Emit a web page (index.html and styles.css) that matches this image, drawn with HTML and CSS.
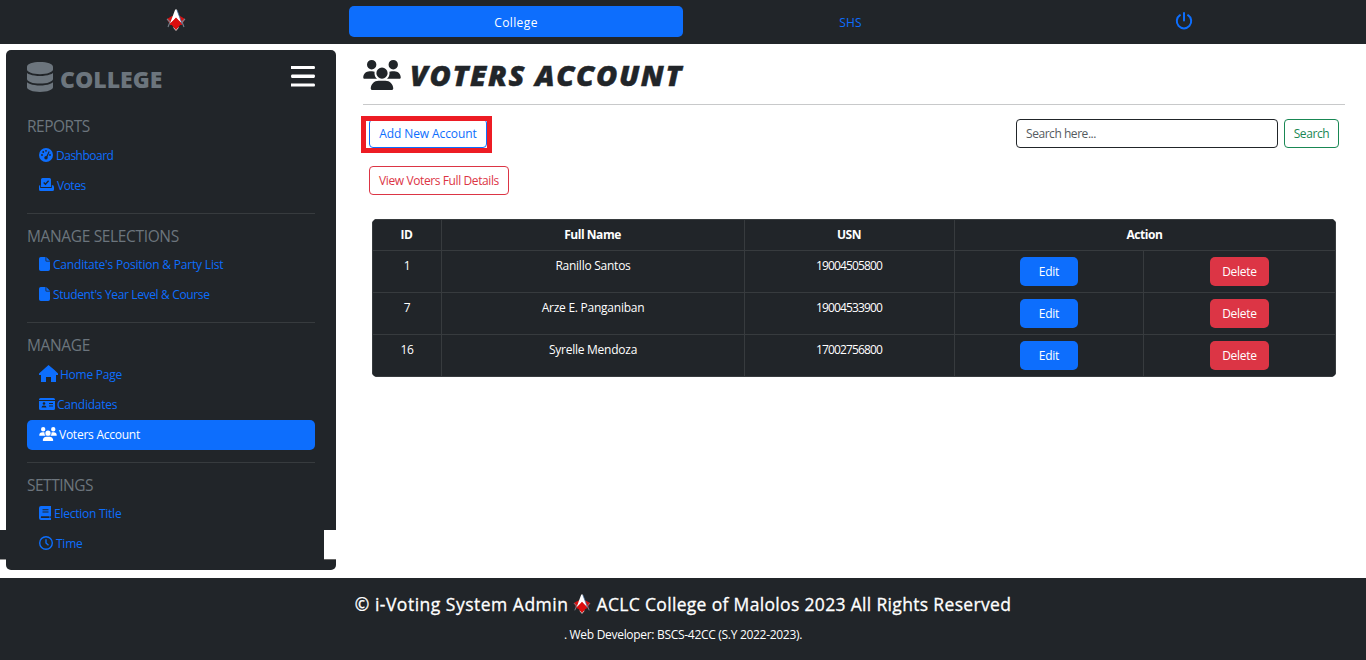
FILE: index.html
```html
<!DOCTYPE html>
<html lang="en">
<head>
<meta charset="utf-8">
<title>Voters Account</title>
<link rel="stylesheet" href="styles.css">
</head>
<body>
<svg class="defs" aria-hidden="true">
  <symbol id="logo" viewBox="0 0 20 22">
    <path d="M1 10 6 7h8l5 3-3 6H4z" fill="#d31212"/>
    <path d="M1 10 4 13 2 18M19 10l-3 3 2 5" fill="none" stroke="#77808a" stroke-width="1.1"/>
    <path d="M9.200 0.500h1.600l3 8 2.200 6L10 9l-6 5.500 2.200-6z" fill="#fff"/>
    <path d="M11 1l3 8 2 6" fill="none" stroke="#416a9a" stroke-width=".8"/>
    <path d="M10 8.500l5.300 6L10 21.500 4.700 14.500z" fill="#dc0d0d"/>
    <path d="M7.500 18.500 10 21.500l2.500-3" fill="none" stroke="#eee" stroke-width=".8"/>
  </symbol>
  <symbol id="users" viewBox="0 0 640 512">
    <path d="M144 0a80 80 0 1 1 0 160A80 80 0 1 1 144 0zM512 0a80 80 0 1 1 0 160A80 80 0 1 1 512 0zM0 298.700C0 239.800 47.800 192 106.700 192h42.700c15.900 0 31 3.500 44.600 9.700c-1.300 7.200-1.900 14.700-1.900 22.300c0 38.200 16.800 72.500 43.300 96H21.300C9.600 320 0 310.400 0 298.700zM405.300 320h-.7c26.600-23.500 43.300-57.800 43.300-96c0-7.600-.7-15-1.900-22.300c13.600-6.300 28.700-9.700 44.600-9.700h42.700C592.200 192 640 239.800 640 298.700c0 11.800-9.600 21.300-21.300 21.300H405.300zM224 224a96 96 0 1 1 192 0a96 96 0 1 1-192 0zM128 485.300C128 411.700 187.700 352 261.300 352H378.700C452.300 352 512 411.700 512 485.300c0 14.700-11.900 26.700-26.700 26.700H154.700c-14.700 0-26.700-11.900-26.700-26.700z"/>
  </symbol>
  <symbol id="file" viewBox="0 0 11 14" preserveAspectRatio="none">
    <path d="M1.800 0H6.500v3.500q0 1 1 1H11v7.700q0 1.800-1.800 1.800H1.800Q0 14 0 12.200V1.800Q0 0 1.800 0zM7.300 0L11 3.700H7.300z"/>
  </symbol>
</svg>

<header class="topbar">
  <a class="tab brand"><svg class="logo"><use href="#logo"/></svg></a>
  <a class="tab active"><span class="t-college">College</span></a>
  <a class="tab"><span class="t-shs">SHS</span></a>
  <a class="tab"><svg class="power" viewBox="0 0 18 18"><path d="M9 1v7.500M5 3.200a7.200 7.200 0 1 0 8 0" fill="none" stroke="currentColor" stroke-width="2" stroke-linecap="round"/></svg></a>
</header>

<div class="page">
  <aside class="sidebar">
    <div class="side-head">
      <svg class="db" viewBox="0 0 448 512" preserveAspectRatio="none"><path d="M448 80v48c0 44.200-100.300 80-224 80S0 172.200 0 128V80C0 35.800 100.300 0 224 0S448 35.800 448 80zM393.200 214.700c20.800-7.400 39.900-16.900 54.800-28.600V288c0 44.200-100.300 80-224 80S0 332.200 0 288V186.100c14.900 11.800 34 21.200 54.800 28.600C99.700 230.700 159.500 240 224 240s124.300-9.300 169.200-25.300zM0 346.100c14.900 11.800 34 21.200 54.800 28.600C99.700 390.700 159.500 400 224 400s124.300-9.300 169.200-25.300c20.800-7.400 39.900-16.900 54.800-28.600V432c0 44.200-100.300 80-224 80S0 476.200 0 432V346.100z"/></svg>
      <h1 class="side-title">COLLEGE</h1>
      <svg class="bars" viewBox="0 0 24 21"><path d="M0 0h23q1 0 1 1.500T23 3H0zM1 8.500h22q1 0 1 1.500t-1 2H1q-1 0-1-1.700T1 8.500zM0 17.500h23q1 0 1 1.500t-1 1.500H0z"/></svg>
    </div>

    <section class="group">
      <h2>REPORTS</h2>
      <a class="item"><svg class="i14" viewBox="0 0 14 14"><circle cx="7" cy="7" r="7"/><g class="cut"><circle cx="3" cy="7" r=".9"/><circle cx="4.200" cy="4" r=".9"/><circle cx="7" cy="2.800" r=".9"/><circle cx="11" cy="7" r=".9"/><circle cx="7" cy="9.800" r="1.700"/><path d="M9.700 3.300l.9.500L8.200 9.500l-1.200-.6z"/></g></svg><span class="tight">Dashboard</span></a>
      <a class="item"><svg class="i15" viewBox="0 0 15 13"><path d="M2 1.500Q2 0 3.500 0h7Q12 0 12 1.500V9H2zM0 8.500Q0 7 1.200 7v3h11.600V7Q15 7 15 9v2.500q0 1.500-1.500 1.500h-12Q0 13 0 11.500z"/><path d="M4.700 4.500l1.700 1.800 3.200-3.600" class="cutline"/></svg><span class="tight">Votes</span></a>
    </section>

    <section class="group">
      <h2 class="wide">MANAGE SELECTIONS</h2>
      <a class="item"><svg class="i11"><use href="#file"/></svg><span class="t-pos">Canditate's Position &amp; Party List</span></a>
      <a class="item"><svg class="i11"><use href="#file"/></svg><span class="t-year">Student's Year Level &amp; Course</span></a>
    </section>

    <section class="group">
      <h2 class="wide">MANAGE</h2>
      <a class="item near"><svg class="i19" viewBox="0 0 19 17"><path d="M9.500 0 0 8.500V10h2v7h5v-5h5v5h5v-7h2V8.500L15.500 5z"/></svg><span>Home Page</span></a>
      <a class="item near"><svg class="i16" viewBox="0 0 16 12"><path d="M0 1.500Q0 0 1.500 0h13Q16 0 16 1.500V2H0zM0 3h16v7.500q0 1.500-1.500 1.500h-13Q0 12 0 10.500z"/><g class="cut"><circle cx="5" cy="5.500" r="1.300"/><path d="M2.500 9.500q0-2 2.500-2t2.500 2zM10 5h4v1h-4zM10 7.500h4v1h-4z"/></g></svg><span>Candidates</span></a>
      <a class="item near active"><svg class="i18"><use href="#users"/></svg><span>Voters Account</span></a>
    </section>

    <section class="group">
      <h2>SETTINGS</h2>
      <a class="item"><svg class="i12" viewBox="0 0 12 14"><path d="M0 2Q0 0 2 0h10v10l-.7.500V12H12v2H2q-2 0-2-2z"/><path class="cut" d="M3.500 3.200h6v1h-6zM3.500 5.500h6v1h-6zM2.200 10.300h8.300V12H2.200q-1-.8 0-1.700z"/></svg><span>Election Title</span></a>
      <a class="item"><svg class="i14" viewBox="0 0 14 14"><path d="M7 3.200V7l2.500 2.200" fill="none" stroke="currentColor" stroke-width="1.400"/><circle cx="7" cy="7" r="6.300" fill="none" stroke="currentColor" stroke-width="1.400"/></svg><span>Time</span></a>
    </section>
    <i class="band-left"></i><i class="band-right"></i>
  </aside>

  <main class="content">
    <div class="title-row">
      <svg class="title-icon"><use href="#users"/></svg>
      <h1 class="title">VOTERS ACCOUNT</h1>
    </div>
    <div class="tools">
      <div class="tool-left">
        <a class="btn blue"><span>Add New Account</span></a>
        <a class="btn red"><span>View Voters Full Details</span></a>
        <i class="marker"></i>
      </div>
      <form class="search">
        <input class="field" placeholder="Search here...">
        <button type="button" class="btn green"><span>Search</span></button>
      </form>
    </div>
    <div class="table-wrap">
      <table>
        <colgroup><col class="c1"><col class="c2"><col class="c3"><col class="c4"><col class="c5"></colgroup>
        <thead><tr><th>ID</th><th>Full Name</th><th>USN</th><th colspan="2">Action</th></tr></thead>
        <tbody>
          <tr><td>1</td><td>Ranillo Santos</td><td class="num">19004505800</td><td><a class="act edit">Edit</a></td><td><a class="act del">Delete</a></td></tr>
          <tr><td>7</td><td>Arze E. Panganiban</td><td class="num">19004533900</td><td><a class="act edit">Edit</a></td><td><a class="act del">Delete</a></td></tr>
          <tr><td>16</td><td>Syrelle Mendoza</td><td class="num">17002756800</td><td><a class="act edit">Edit</a></td><td><a class="act del">Delete</a></td></tr>
        </tbody>
      </table>
    </div>
  </main>
</div>

<footer class="footer">
  <div class="copy"><span class="f1">© i-Voting System Admin</span><svg class="logo small"><use href="#logo"/></svg><span class="f2">ACLC College of Malolos 2023 All Rights Reserved</span></div>
  <div class="dev">. Web Developer: BSCS-42CC (S.Y 2022-2023).</div>
</footer>
</body>
</html>
```

FILE: styles.css
```css
* { box-sizing: border-box; }
body { margin: 0; height: 660px; overflow: hidden; background: #fff; color: #212529; font: 12px/18px "Open Sans", "Noto Sans", sans-serif; letter-spacing: -.25px; white-space: nowrap; }
h1, h2 { margin: 0; }
svg { display: block; fill: currentColor; flex: none; }
.defs { position: absolute; width: 0; height: 0; }

.topbar { height: 44px; padding: 6px 15px 7px; background: #212529; display: grid; grid-template-columns: repeat(4, 334px); }
.tab { display: flex; align-items: center; justify-content: center; color: #0d6efd; border-radius: 5px; padding-top: 2px; }
.tab.active { background: #0d6efd; color: #fff; }
.t-college { letter-spacing: .4px; }
.t-shs { letter-spacing: .1px; padding-left: 1px; }
.brand { padding: 0 12px 3px 0; }
.logo { width: 20px; height: 22px; }
.power { width: 18px; height: 18px; margin-bottom: 3px; }

.page { display: flex; height: 534px; padding: 6px 21px 8px 6px; }
.sidebar { position: relative; width: 330px; height: 520px; padding: 11px 21px; background: #212529; border-radius: 5px; }
.side-head { display: flex; align-items: center; height: 32px; color: #6c757d; margin-bottom: 22px; }
.db { width: 26px; height: 30px; }
.side-title { margin: 3px 0 0 7px; font-size: 23px; line-height: 30px; font-weight: 800; letter-spacing: 0; }
.bars { width: 24px; height: 21px; margin: 0 0 2px auto; color: #fff; }
.group { padding-bottom: 12px; }
.group + .group { border-top: 1px solid #373b3e; padding-top: 11px; }
.group h2 { font-size: 15.500px; line-height: 22px; height: 25.500px; font-weight: 400; color: #6c757d; letter-spacing: -.5px; }
.group h2.wide { letter-spacing: -.35px; }
.item { display: flex; align-items: center; height: 30px; padding: 0 12px; color: #0d6efd; border-radius: 5px; gap: 3px; }
.item.near { gap: 2px; }
.tight { letter-spacing: -.5px; }
.t-pos { letter-spacing: -.2px; }
.t-year { letter-spacing: -.35px; }
.item svg { margin-bottom: 2px; }
.item.active { background: #0d6efd; color: #fff; }
.i11 { width: 11px; height: 14px; }
.i12 { width: 12px; height: 14px; }
.i14 { width: 14px; height: 14px; }
.i15 { width: 15px; height: 13px; }
.i16 { width: 16px; height: 12px; }
.i18 { width: 18px; height: 14px; }
.i19 { width: 19px; height: 17px; }
.cut { fill: #212529; }
.cutline { fill: none; stroke: #212529; stroke-width: 1.300; }
.band-left, .band-right { position: absolute; top: 480px; height: 30px; border-bottom: 1px solid #999; }
.band-left { left: -6px; width: 6px; background: #212529; }
.band-right { right: 0; width: 12px; background: #fff; border-bottom-color: #666; }

.content { flex: 1; padding-left: 27px; }
.title-row { display: flex; align-items: center; height: 55px; padding-bottom: 5px; border-bottom: 1px solid #c8c9ca; }
.title-icon { width: 38px; height: 30px; }
.title { margin-left: 9px; font-size: 29px; line-height: 36px; font-weight: 800; font-style: italic; letter-spacing: 1.600px; -webkit-text-stroke: .5px; }
.tools { display: flex; justify-content: space-between; align-items: flex-start; padding: 14px 6px 0; height: 114px; }
.tool-left { position: relative; display: flex; flex-direction: column; align-items: flex-start; gap: 18px; }
.btn { display: flex; align-items: center; justify-content: center; height: 29px; border: 1px solid; border-radius: 4px; background: #fff; font: inherit; letter-spacing: inherit; padding: 0; }
.blue { width: 118px; color: #0d6efd; letter-spacing: -.1px; }
.red { width: 140px; color: #dc3545; letter-spacing: -.4px; }
.green { width: 55px; color: #198754; letter-spacing: -.4px; }
.marker { position: absolute; left: -8px; top: -3px; width: 131px; height: 37px; border: 5px solid #ed1c24; }
.search { display: flex; gap: 6px; }
.field { width: 262px; height: 29px; border: 1px solid #212529; border-radius: 4px; padding: 0 9px; font: inherit; letter-spacing: -.45px; }
.field::placeholder { color: #555b60; opacity: 1; }

.table-wrap { width: 964px; margin-left: 9px; border-radius: 5px; overflow: hidden; background: #212529; color: #fff; }
table { width: 964px; table-layout: fixed; border-collapse: collapse; }
.c1 { width: 69px; } .c2 { width: 303px; } .c3 { width: 210px; } .c4 { width: 189px; } .c5 { width: 192px; }
th, td { border: 1px solid #373b3e; padding: 6px 0 0; text-align: center; vertical-align: top; }
th { height: 31px; font-weight: 700; padding-right: 1px; letter-spacing: -.45px; }
td { height: 42px; }
.num { letter-spacing: -.85px; padding-right: 1px; }
.act { display: flex; align-items: center; justify-content: center; height: 29px; margin: 0 auto; border-radius: 5px; }
.edit { width: 58px; background: #0d6efd; }
.del { width: 59px; background: #dc3545; }

.footer { height: 82px; background: #212529; color: #fff; padding-top: 13px; }
.copy { display: flex; align-items: center; justify-content: center; height: 26px; font-size: 17.500px; -webkit-text-stroke: .3px; }
.f1 { letter-spacing: .500px; }
.f2 { letter-spacing: .330px; }
.small { width: 18px; height: 22px; margin: 0 5px; -webkit-text-stroke: 0; }
.dev { margin-top: 9px; text-align: center; letter-spacing: -.3px; }
```
